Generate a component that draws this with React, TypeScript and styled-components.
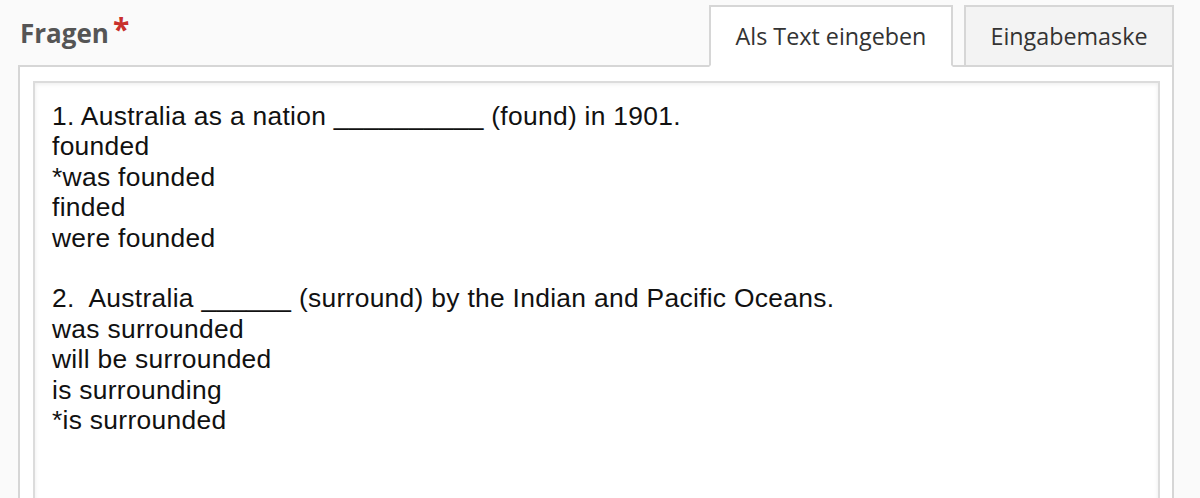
import React from "react";
import styled, { createGlobalStyle } from "styled-components";

const Global = createGlobalStyle`
  html, body {
    margin: 0;
    padding: 0;
    background: #fafafa;
    overflow: hidden;
  }
  * { box-sizing: border-box; }
`;

const Page = styled.div`
  padding: 5px 26px 0 18px;
  font-family: "Open Sans", "Noto Sans", sans-serif;
`;

const Header = styled.div`
  display: flex;
  justify-content: space-between;
  align-items: flex-start;
  height: 60px;
`;

const Label = styled.label`
  display: flex;
  align-items: flex-start;
  margin: 10px 0 0 2px;
  font-size: 26px;
  line-height: 36px;
  font-weight: 700;
  color: #555;
`;

const Required = styled.span`
  color: #c9302c;
  font-size: 30px;
  line-height: 30px;
  font-weight: 700;
  margin-left: 4px;
  margin-top: -1px;
`;

const Tabs = styled.div`
  display: flex;
  gap: 11px;
  position: relative;
  z-index: 1;
`;

const Tab = styled.button<{ $active?: boolean }>`
  height: 62px;
  padding: 0 0 1px;
  border: 2px solid #d6d6d6;
  border-bottom-color: ${(p) => (p.$active ? "#ffffff" : "#d6d6d6")};
  background: ${(p) => (p.$active ? "#ffffff" : "#f3f3f3")};
  font-family: "Open Sans", "Noto Sans", sans-serif;
  font-size: 23.3px;
  line-height: 30px;
  color: #333;
  cursor: pointer;
  width: ${(p) => (p.$active ? "244px" : "210px")};
`;

const Box = styled.div`
  border: 2px solid #d6d6d6;
  background: #ffffff;
  padding: 14px 12px 0 13px;
`;

const TextArea = styled.textarea`
  display: block;
  width: 100%;
  height: 520px;
  resize: none;
  border: 2px solid #dcdcdc;
  box-shadow: inset 0 1px 4px rgba(0, 0, 0, 0.08);
  padding: 18px 17px;
  font-family: "Liberation Sans", Arial, sans-serif;
  font-size: 26.4px;
  line-height: 30.4px;
  letter-spacing: 0.3px;
  color: #111;
  background: #ffffff;
  outline: none;
`;

const content = `1. Australia as a nation __________ (found) in 1901.
founded
*was founded
finded
were founded

2.  Australia ______ (surround) by the Indian and Pacific Oceans.
was surrounded
will be surrounded
is surrounding
*is surrounded`;

export default function App() {
  return (
    <>
      <Global />
      <Page>
        <Header>
          <Label>
            Fragen<Required>*</Required>
          </Label>
          <Tabs>
            <Tab $active>Als Text eingeben</Tab>
            <Tab>Eingabemaske</Tab>
          </Tabs>
        </Header>
        <Box>
          <TextArea defaultValue={content} spellCheck={false} />
        </Box>
      </Page>
    </>
  );
}
